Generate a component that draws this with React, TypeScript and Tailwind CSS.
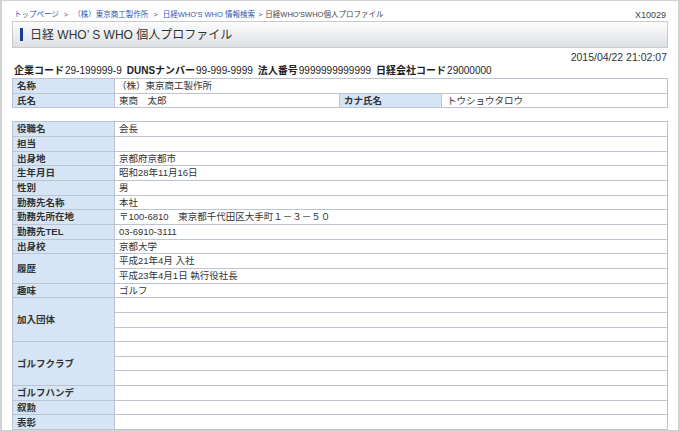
const font = { fontFamily: '"Liberation Sans", "Noto Sans CJK JP", sans-serif' };

const line = "border-[#bcc5cf]";

type Item = { label: string; values: string[] };

const items: Item[] = [
  { label: "役職名", values: ["会長"] },
  { label: "担当", values: [""] },
  { label: "出身地", values: ["京都府京都市"] },
  { label: "生年月日", values: ["昭和28年11月16日"] },
  { label: "性別", values: ["男"] },
  { label: "勤務先名称", values: ["本社"] },
  { label: "勤務先所在地", values: ["〒100-6810　東京都千代田区大手町１－３－５０"] },
  { label: "勤務先TEL", values: ["03-6910-3111"] },
  { label: "出身校", values: ["京都大学"] },
  { label: "履歴", values: ["平成21年4月 入社", "平成23年4月1日 執行役社長"] },
  { label: "趣味", values: ["ゴルフ"] },
  { label: "加入団体", values: ["", "", ""] },
  { label: "ゴルフクラブ", values: ["", "", ""] },
  { label: "ゴルフハンデ", values: [""] },
  { label: "叙勲", values: [""] },
  { label: "表彰", values: [""] },
  { label: "", values: [""] },
  { label: "", values: [""] },
];

const codes = [
  ["企業コード", "29-199999-9"],
  ["DUNSナンバー", "99-999-9999"],
  ["法人番号", "9999999999999"],
  ["日経会社コード", "29000000"],
];

function Label({ children }: { children?: React.ReactNode }) {
  return (
    <div
      className={`w-[102px] shrink-0 bg-[#d5e5f5] border-r ${line} pl-[4px] flex items-center font-bold text-[9.5px] leading-none text-[#333]`}
    >
      {children}
    </div>
  );
}

function ProfileRow({ item }: { item: Item }) {
  const n = item.values.length;
  return (
    <div className={`flex border-b ${line}`}>
      <Label>{item.label}</Label>
      <div className="flex-1 flex flex-col">
        {item.values.map((v, i) => (
          <div
            key={i}
            className={
              i < n - 1
                ? `h-[14.67px] border-b ${line} flex items-center pl-[4px] text-[9.5px] leading-none text-[#333]`
                : "h-[13.67px] flex items-center pl-[4px] text-[9.5px] leading-none text-[#333]"
            }
          >
            {v}
          </div>
        ))}
      </div>
    </div>
  );
}

export default function App() {
  return (
    <div
      style={font}
      className="w-[680px] h-[432px] overflow-hidden bg-white border-l-2 border-t border-r-2 border-b-2 border-[#d2d2d2] pt-[8px] pl-[10px] pr-[10px]"
    >
      {/* breadcrumb */}
      <div className="h-[12px] flex items-center justify-between text-[7.5px] leading-none">
        <div className="flex items-center pl-[2px]">
          <span className="text-[#2f55b4]">トップページ</span>
          <span className="mx-[5px] text-[#555]">&gt;</span>
          <span className="text-[#2f55b4]">（株）東京商工製作所</span>
          <span className="mx-[5px] text-[#555]">&gt;</span>
          <span className="text-[#2f55b4]">日経WHO&apos;S WHO 情報検索</span>
          <span className="mx-[3px] text-[#555]">&gt;</span>
          <span className="text-[#444]">日経WHO&apos;SWHO個人プロファイル</span>
        </div>
        <span className="text-[9px] text-[#444] pr-[2px]">X10029</span>
      </div>

      {/* title bar */}
      <div className="h-[27px] border border-[#cacaca] bg-linear-to-b from-[#fdfdfd] to-[#dde0e4] flex items-center pl-[7px]">
        <span className="w-[3px] h-[13px] bg-[#1b3f8f] mr-[7px]" />
        <span className="text-[12px] leading-none text-[#333]">日経 WHO’ S WHO 個人プロファイル</span>
      </div>

      <div className="mt-[3px] h-[13px] flex items-center justify-end pr-[1px] text-[10.5px] leading-none text-[#333]">
        2015/04/22 21:02:07
      </div>

      {/* codes */}
      <div className="h-[14px] flex items-center pl-[2px] text-[10px] leading-none text-[#222]">
        {codes.map(([k, v]) => (
          <span key={k} className="mr-[5px]">
            <b>{k}</b>
            <span className="ml-[1px]">{v}</span>
          </span>
        ))}
      </div>

      {/* name table */}
      <div className={`border-t border-x ${line}`}>
        <div className={`flex h-[14.67px] border-b ${line}`}>
          <Label>名称</Label>
          <div className="flex-1 flex items-center pl-[2px] text-[9.5px] leading-none text-[#333]">
            （株）東京商工製作所
          </div>
        </div>
        <div className={`flex h-[14.67px] border-b ${line}`}>
          <Label>氏名</Label>
          <div className={`flex-1 flex items-center pl-[4px] border-r ${line} text-[9.5px] leading-none text-[#333]`}>
            東商　太郎
          </div>
          <Label>カナ氏名</Label>
          <div className="flex-1 flex items-center pl-[5px] text-[9.5px] leading-none text-[#333]">
            トウショウタロウ
          </div>
        </div>
      </div>

      {/* profile table */}
      <div className={`mt-[13px] border-t border-x ${line}`}>
        {items.map((it, i) => (
          <ProfileRow key={i} item={it} />
        ))}
      </div>
    </div>
  );
}
